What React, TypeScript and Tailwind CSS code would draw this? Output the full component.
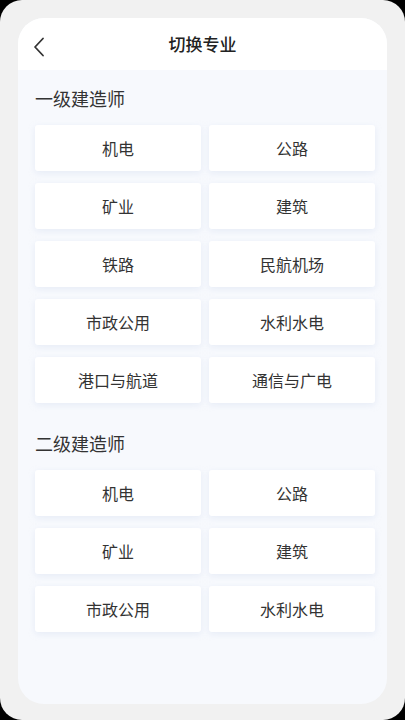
const groups = [
  {
    title: "一级建造师",
    items: ["机电", "公路", "矿业", "建筑", "铁路", "民航机场", "市政公用", "水利水电", "港口与航道", "通信与广电"],
  },
  {
    title: "二级建造师",
    items: ["机电", "公路", "矿业", "建筑", "市政公用", "水利水电"],
  },
];

export default function App() {
  return (
    <div
      className="h-[720px] w-[405px] bg-black"
      style={{ fontFamily: '"Noto Sans CJK SC", "Noto Sans", sans-serif' }}
    >
      <div className="h-full w-full rounded-[22px] bg-[#f1f1f1] p-[18px] pb-[16px]">
        <div className="flex h-full flex-col overflow-hidden rounded-[26px] bg-[#f7f9fd]">
          <header className="relative flex h-[52px] shrink-0 items-center justify-center bg-white">
            <svg
              className="absolute left-[15px] top-[19px]"
              width="12"
              height="20"
              viewBox="0 0 12 20"
              fill="none"
            >
              <path d="M10 1.5 L2 10 L10 18.5" stroke="#333" strokeWidth="1.8" strokeLinecap="round" strokeLinejoin="round" />
            </svg>
            <h1 className="text-[17px] font-medium text-[#222]">切换专业</h1>
          </header>

          <div className="flex flex-col pl-[17px] pr-[12px] pt-[16px]">
            {groups.map((g, gi) => (
              <section key={g.title} className={gi > 0 ? "mt-[28px]" : ""}>
                <h2 className="text-[18px] leading-[24px] text-[#333]">{g.title}</h2>
                <div className="mt-[15px] grid grid-cols-2 gap-x-[8px] gap-y-[12px]">
                  {g.items.map((it, i) => (
                    <div
                      key={i}
                      className="flex h-[46px] items-center justify-center rounded-[3px] bg-white text-[16px] text-[#333] shadow-[0_2px_6px_rgba(200,212,235,0.35)]"
                    >
                      {it}
                    </div>
                  ))}
                </div>
              </section>
            ))}
          </div>
        </div>
      </div>
    </div>
  );
}
